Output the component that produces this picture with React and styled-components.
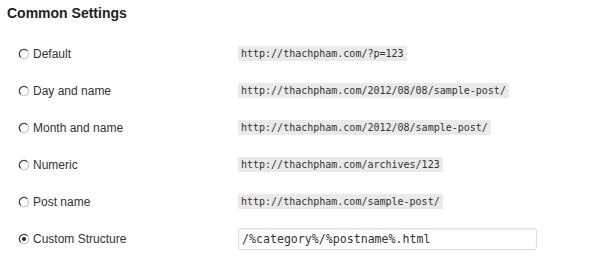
import React from 'react';
import styled, { createGlobalStyle } from 'styled-components';

const GlobalStyle = createGlobalStyle`
  body {
    margin: 0;
    background: #ffffff;
    font-family: "Liberation Sans", Arial, sans-serif;
  }
`;

const Page = styled.div`
  width: 590px;
  height: 265px;
  padding: 5px 0 0 7px;
  box-sizing: border-box;
  overflow: hidden;
`;

const Title = styled.h3`
  margin: 0;
  font-size: 14px;
  line-height: 16px;
  font-weight: bold;
  color: #222222;
`;

const List = styled.div`
  margin-top: 14px;
  display: flex;
  flex-direction: column;
`;

const Row = styled.div`
  display: grid;
  grid-template-columns: 231px 1fr;
  align-items: center;
  height: 37px;
`;

const Label = styled.label`
  display: flex;
  align-items: center;
  gap: 3px;
  padding-left: 11px;
  font-size: 12px;
  color: #333333;
`;

const Code = styled.code`
  justify-self: start;
  background: #eaeaea;
  padding: 1px 3px 1px 3px;
  font-family: "DejaVu Sans Mono", "Liberation Mono", monospace;
  font-size: 10px;
  line-height: 13px;
  color: #333333;
`;

const Input = styled.input`
  width: 299px;
  height: 22px;
  box-sizing: border-box;
  margin: 0;
  padding: 0 3px;
  border: 1px solid #dddddd;
  border-radius: 3px;
  box-shadow: inset 0 1px 2px rgba(0, 0, 0, 0.07);
  font-family: "DejaVu Sans Mono", "Liberation Mono", monospace;
  font-size: 11.6px;
  color: #333333;
  outline: none;
`;

const Radio = ({ checked }) => (
  <svg width="12" height="12" viewBox="0 0 12 12">
    <circle cx="6" cy="6" r="4.7" fill="#ffffff" stroke="#c4c4c4" strokeWidth="1.1" />
    <path d="M9.3 2.7 A4.7 4.7 0 0 0 1.3 6 A4.7 4.7 0 0 0 2.7 9.3" fill="none" stroke="#444444" strokeWidth="1.2" />
    {checked && <circle cx="6" cy="6" r="2" fill="#222222" />}
  </svg>
);

const rows = [
  { label: 'Default', code: 'http://thachpham.com/?p=123' },
  { label: 'Day and name', code: 'http://thachpham.com/2012/08/08/sample-post/' },
  { label: 'Month and name', code: 'http://thachpham.com/2012/08/sample-post/' },
  { label: 'Numeric', code: 'http://thachpham.com/archives/123' },
  { label: 'Post name', code: 'http://thachpham.com/sample-post/' },
];

export default function App() {
  return (
    <Page>
      <GlobalStyle />
      <Title>Common Settings</Title>
      <List>
        {rows.map((row) => (
          <Row key={row.label}>
            <Label>
              <Radio />
              {row.label}
            </Label>
            <Code>{row.code}</Code>
          </Row>
        ))}
        <Row>
          <Label>
            <Radio checked />
            Custom Structure
          </Label>
          <Input defaultValue="/%category%/%postname%.html" />
        </Row>
      </List>
    </Page>
  );
}
